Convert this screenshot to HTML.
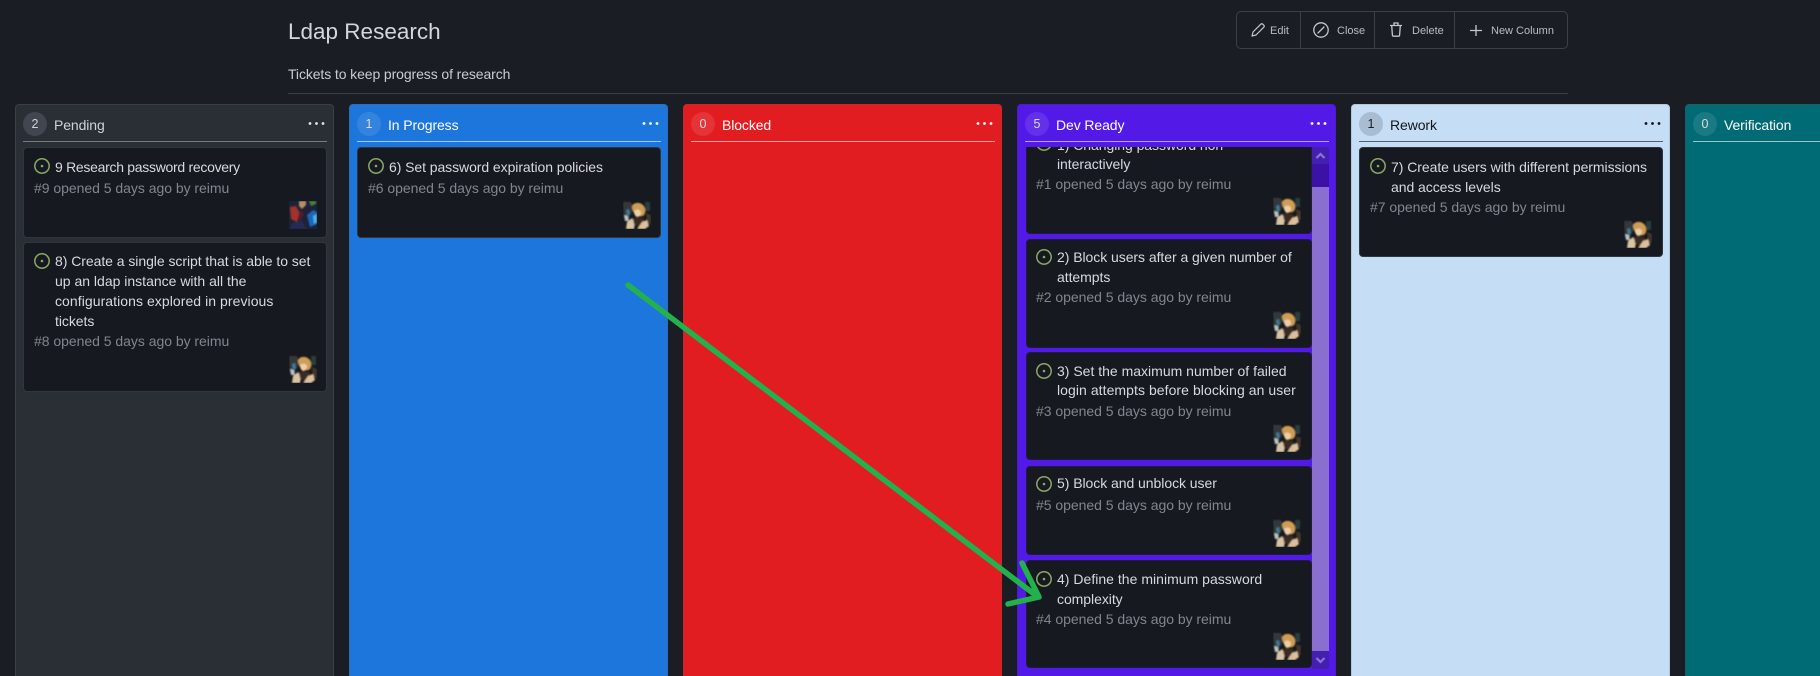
<!DOCTYPE html>
<html><head><meta charset="utf-8"><style>
html,body{margin:0;padding:0;background:#1a1d23;width:1820px;height:676px;overflow:hidden;font-family:"Liberation Sans",sans-serif;}
*{box-sizing:border-box}
#w{position:absolute;left:0;top:0;width:1820px;height:676px;overflow:hidden}
.a{position:absolute}
.t{position:absolute;white-space:nowrap;line-height:20px;font-size:14px;color:#d6d9dd;letter-spacing:-.05px}
.m{position:absolute;white-space:nowrap;line-height:20px;font-size:14px;color:#80868e;letter-spacing:-.03px}
.col{position:absolute;top:104px;width:319px;height:580px;border-radius:4px;border:1px solid rgba(255,255,255,.08)}
.b{position:absolute;left:7px;top:7px;width:24px;height:24px;border-radius:50%;background:rgba(255,255,255,.1);text-align:center;line-height:24px;font-size:12.5px;color:#ddd}
.n{position:absolute;left:38px;top:10px;line-height:20px;font-size:14px;color:#fff;white-space:nowrap;letter-spacing:-.1px}
.h{position:absolute;left:7px;width:304px;top:36px;height:1px;background:rgba(255,255,255,.6)}
.d{position:absolute;left:292px;top:16px;width:17px;height:5px}
.c{position:absolute;background:#16191f;border:1px solid #30363d;border-radius:4px}
.i{position:absolute;width:16px;height:16px}
.v{position:absolute;width:28px;height:28px}
.bt{position:absolute;top:31px;transform:translateY(-50%);font-size:11px;color:#b9bdc3;line-height:14px;white-space:nowrap}
</style></head><body><div id="w">
<svg width="0" height="0" style="position:absolute"><defs>
<filter id="bl" x="-10%" y="-10%" width="120%" height="120%"><feGaussianBlur stdDeviation=".7"/></filter>
<symbol id="ic" viewBox="0 0 16 16"><circle cx="8" cy="8" r="7.2" fill="none" stroke="#8aa867" stroke-width="1.5"/><circle cx="8" cy="8" r="1.3" fill="#8aa867"/></symbol>
<symbol id="av1" viewBox="0 0 28 28"><rect width="28" height="28" fill="#17181b"/><g filter="url(#bl)"><path d="M0 1h8l2 8-4 8H1z" fill="#34383a"/><path d="M3 9l3-1 1 5-3 2z" fill="#3a7a96"/><path d="M1 14l4 1 1 5-4 0z" fill="#b8c4c4"/><path d="M22 1h5v9h-4z" fill="#28403f"/><path d="M9 5c2-4 8-4 11-1 3 3 3 7 1 10-2 2-7 2-9-1-2-2-3-5-3-8z" fill="#cf9d55"/><path d="M11 10c2-2 6-2 7 1 0 3-2 5-4 5-2-1-3-3-3-6z" fill="#eccfa8"/><path d="M4 21l5-4 3 5-1 6H3z" fill="#d9c4a4"/><path d="M10 17l10 0 2 6-6 3-5-3z" fill="#3a2a22"/><path d="M23 12l5 2v9l-4-1z" fill="#41342a"/><path d="M19 21l5-2 2 6-4 3h-8l3-4z" fill="#dcc09c"/></g></symbol>
<symbol id="av2" viewBox="0 0 28 28"><rect width="28" height="28" fill="#1c2238"/><g filter="url(#bl)"><path d="M1 6l6-1 4 8-3 8-6-3z" fill="#a4302c"/><path d="M10 0h7l0 4-4 4-3-3z" fill="#b48d6b"/><path d="M20 0h7v3l-5 2z" fill="#4a8238"/><path d="M18 14l6-5 4 2v12l-7 3z" fill="#1c66bb"/><path d="M24 15l4-2v8l-3 2z" fill="#46b4ee"/><path d="M3 22l10-2 5 8H1z" fill="#222a54"/><path d="M11 9l4 3-3 8-3-3z" fill="#4e1e2e"/></g></symbol>
</defs></svg>

<!-- header -->
<div class="a" style="left:288px;top:14px;font-size:22.5px;line-height:36px;color:#d3d6da;white-space:nowrap">Ldap Research</div>
<div class="a" style="left:288px;top:64px;font-size:14px;line-height:20px;color:#c9ccd0;white-space:nowrap;letter-spacing:-.1px">Tickets to keep progress of research</div>
<div class="a" style="left:288px;top:93px;width:1280px;height:1px;background:#3c4046"></div>

<div class="a" style="left:1236px;top:11px;width:332px;height:38px;border:1px solid #3c4046;border-radius:5px"></div>
<div class="a" style="left:1300px;top:12px;width:1px;height:36px;background:#3c4046"></div>
<div class="a" style="left:1374px;top:12px;width:1px;height:36px;background:#3c4046"></div>
<div class="a" style="left:1454px;top:12px;width:1px;height:36px;background:#3c4046"></div>
<svg class="a" style="left:1251px;top:23px" width="14" height="14" viewBox="0 0 14 14" fill="none" stroke="#c4c8cd" stroke-width="1.2" stroke-linejoin="round"><path d="M1 13l1-4L9.8 1.2c.6-.6 1.4-.6 2 0l1 1c.6.6.6 1.4 0 2L5 12z"/></svg>
<div class="bt" style="left:1270px">Edit</div>
<svg class="a" style="left:1313px;top:22px" width="16" height="16" viewBox="0 0 16 16" fill="none" stroke="#c4c8cd" stroke-width="1.3"><circle cx="8" cy="8" r="7.2"/><path d="M5 11L11 5" stroke-linecap="round"/></svg>
<div class="bt" style="left:1337px">Close</div>
<svg class="a" style="left:1390px;top:22px" width="12" height="15" viewBox="0 0 12 15" fill="none" stroke="#c4c8cd" stroke-width="1.3"><path d="M0 3.5h12M4 3.2V1h4v2.2M1.7 3.5l.7 9.5c0 .7.5 1.2 1.1 1.2h5c.6 0 1.1-.5 1.1-1.2l.7-9.5"/></svg>
<div class="bt" style="left:1412px">Delete</div>
<svg class="a" style="left:1470px;top:25px" width="12" height="11" viewBox="0 0 12 11" fill="none" stroke="#c4c8cd" stroke-width="1.3"><path d="M6 0v11M0 5.5h12"/></svg>
<div class="bt" style="left:1491px">New Column</div>

<!-- Pending -->
<div class="col" style="left:15px;background:#2a2e35;border-color:#3b3f46">
<div class="b" style="background:#41464f;color:#cfd2d6">2</div><div class="n" style="color:#cfd2d6">Pending</div><div class="h" style="background:#777b82"></div>
<svg class="d" viewBox="0 0 17 5" fill="#e4e6e8"><circle cx="2" cy="2.5" r="1.4"/><circle cx="8.5" cy="2.5" r="1.4"/><circle cx="15" cy="2.5" r="1.4"/></svg>
</div>
<div class="c" style="left:23px;top:147px;width:304px;height:91px"></div>
<svg class="i" style="left:34px;top:158px"><use href="#ic"/></svg>
<div class="t" style="left:55px;top:157px;letter-spacing:-.29px">9 Research password recovery</div>
<div class="m" style="left:34px;top:178px">#9 opened 5 days ago by reimu</div>
<svg class="v" style="left:289px;top:201px"><use href="#av2"/></svg>
<div class="c" style="left:23px;top:242px;width:304px;height:150px"></div>
<svg class="i" style="left:34px;top:253px"><use href="#ic"/></svg>
<div class="t" style="left:55px;top:251px">8) Create a single script that is able to set</div>
<div class="t" style="left:55px;top:271px;letter-spacing:0">up an ldap instance with all the</div>
<div class="t" style="left:55px;top:291px;letter-spacing:.06px">configurations explored in previous</div>
<div class="t" style="left:55px;top:311px">tickets</div>
<div class="m" style="left:34px;top:331px">#8 opened 5 days ago by reimu</div>
<svg class="v" style="left:289px;top:355px"><use href="#av1"/></svg>

<!-- In Progress -->
<div class="col" style="left:349px;background:#1d76db;border-color:#2f6db8">
<div class="b">1</div><div class="n">In Progress</div><div class="h"></div>
<svg class="d" viewBox="0 0 17 5" fill="#fff"><circle cx="2" cy="2.5" r="1.4"/><circle cx="8.5" cy="2.5" r="1.4"/><circle cx="15" cy="2.5" r="1.4"/></svg>
</div>
<div class="c" style="left:357px;top:147px;width:304px;height:91px"></div>
<svg class="i" style="left:368px;top:158px"><use href="#ic"/></svg>
<div class="t" style="left:389px;top:157px;letter-spacing:-.07px">6) Set password expiration policies</div>
<div class="m" style="left:368px;top:178px">#6 opened 5 days ago by reimu</div>
<svg class="v" style="left:623px;top:201px"><use href="#av1"/></svg>

<!-- Blocked -->
<div class="col" style="left:683px;background:#e11d21;border-color:#c8282b">
<div class="b">0</div><div class="n">Blocked</div><div class="h"></div>
<svg class="d" viewBox="0 0 17 5" fill="#fff"><circle cx="2" cy="2.5" r="1.4"/><circle cx="8.5" cy="2.5" r="1.4"/><circle cx="15" cy="2.5" r="1.4"/></svg>
</div>

<!-- Dev Ready -->
<div class="col" style="left:1017px;background:#5319e7;border-color:#4a1ec4">
<div class="b">5</div><div class="n">Dev Ready</div><div class="h"></div>
<svg class="d" viewBox="0 0 17 5" fill="#fff"><circle cx="2" cy="2.5" r="1.4"/><circle cx="8.5" cy="2.5" r="1.4"/><circle cx="15" cy="2.5" r="1.4"/></svg>
</div>
<div class="a" style="left:1026px;top:147px;width:303px;height:522px;overflow:hidden">
 <div class="a" style="left:286px;top:0;width:17px;height:522px;background:#3c11a6"></div>
 <div class="a" style="left:286px;top:40px;width:17px;height:464px;background:#8b6fd0"></div>
 <div class="a" style="left:286px;top:0;width:17px;height:17px;background:#4420b0"></div>
 <div class="a" style="left:286px;top:504px;width:17px;height:18px;background:#4420b0"></div>
 <svg class="a" style="left:289px;top:4px" width="11" height="9" viewBox="0 0 11 9" fill="none" stroke="#8f74cf" stroke-width="2.2"><path d="M1.5 7L5.5 3l4 4"/></svg>
 <svg class="a" style="left:289px;top:509px" width="11" height="9" viewBox="0 0 11 9" fill="none" stroke="#8f74cf" stroke-width="2.2"><path d="M1.5 2L5.5 6l4-4"/></svg>

 <div class="c" style="left:0;top:-23px;width:286px;height:110px;border-color:#1f1c40"></div>
 <svg class="i" style="left:10px;top:-12px"><use href="#ic"/></svg>
 <div class="t" style="left:31px;top:-12px">1) Changing password non</div>
 <div class="t" style="left:31px;top:7px">interactively</div>
 <div class="m" style="left:10px;top:27px">#1 opened 5 days ago by reimu</div>
 <svg class="v" style="left:247px;top:50px"><use href="#av1"/></svg>

 <div class="c" style="left:0;top:92px;width:286px;height:109px;border-color:#1f1c40"></div>
 <svg class="i" style="left:10px;top:102px"><use href="#ic"/></svg>
 <div class="t" style="left:31px;top:100px">2) Block users after a given number of</div>
 <div class="t" style="left:31px;top:120px">attempts</div>
 <div class="m" style="left:10px;top:140px">#2 opened 5 days ago by reimu</div>
 <svg class="v" style="left:247px;top:164px"><use href="#av1"/></svg>

 <div class="c" style="left:0;top:205px;width:286px;height:108px;border-color:#1f1c40"></div>
 <svg class="i" style="left:10px;top:216px"><use href="#ic"/></svg>
 <div class="t" style="left:31px;top:214px;letter-spacing:0">3) Set the maximum number of failed</div>
 <div class="t" style="left:31px;top:233px;letter-spacing:.06px">login attempts before blocking an user</div>
 <div class="m" style="left:10px;top:254px">#3 opened 5 days ago by reimu</div>
 <svg class="v" style="left:247px;top:277px"><use href="#av1"/></svg>

 <div class="c" style="left:0;top:319px;width:286px;height:89px;border-color:#1f1c40"></div>
 <svg class="i" style="left:10px;top:329px"><use href="#ic"/></svg>
 <div class="t" style="left:31px;top:326px">5) Block and unblock user</div>
 <div class="m" style="left:10px;top:348px">#5 opened 5 days ago by reimu</div>
 <svg class="v" style="left:247px;top:372px"><use href="#av1"/></svg>

 <div class="c" style="left:0;top:413px;width:286px;height:108px;border-color:#1f1c40"></div>
 <svg class="i" style="left:10px;top:424px"><use href="#ic"/></svg>
 <div class="t" style="left:31px;top:422px;letter-spacing:.02px">4) Define the minimum password</div>
 <div class="t" style="left:31px;top:442px">complexity</div>
 <div class="m" style="left:10px;top:462px">#4 opened 5 days ago by reimu</div>
 <svg class="v" style="left:247px;top:485px"><use href="#av1"/></svg>
</div>

<!-- Rework -->
<div class="col" style="left:1351px;background:#c5def5;border-color:#b4c6dc">
<div class="b" style="background:#a8bdd1;color:#1a1d23">1</div><div class="n" style="color:#12161c">Rework</div><div class="h" style="background:#56606f"></div>
<svg class="d" viewBox="0 0 17 5" fill="#111"><circle cx="2" cy="2.5" r="1.4"/><circle cx="8.5" cy="2.5" r="1.4"/><circle cx="15" cy="2.5" r="1.4"/></svg>
</div>
<div class="c" style="left:1359px;top:147px;width:304px;height:110px"></div>
<svg class="i" style="left:1370px;top:158px"><use href="#ic"/></svg>
<div class="t" style="left:1391px;top:157px">7) Create users with different permissions</div>
<div class="t" style="left:1391px;top:177px">and access levels</div>
<div class="m" style="left:1370px;top:197px">#7 opened 5 days ago by reimu</div>
<svg class="v" style="left:1624px;top:220px"><use href="#av1"/></svg>

<!-- Verification -->
<div class="col" style="left:1685px;width:319px;background:#006b75;border-color:#1a5f67">
<div class="b">0</div><div class="n">Verification</div><div class="h"></div>
</div>

<!-- Arrow -->
<svg class="a" style="left:0;top:0;pointer-events:none" width="1820" height="676" fill="none" stroke="#22b14c" stroke-width="5.5" stroke-linecap="round" stroke-linejoin="round"><path d="M628 285L1038 597"/><path d="M1022 563L1039 597L1008 604"/></svg>
</div></body></html>
